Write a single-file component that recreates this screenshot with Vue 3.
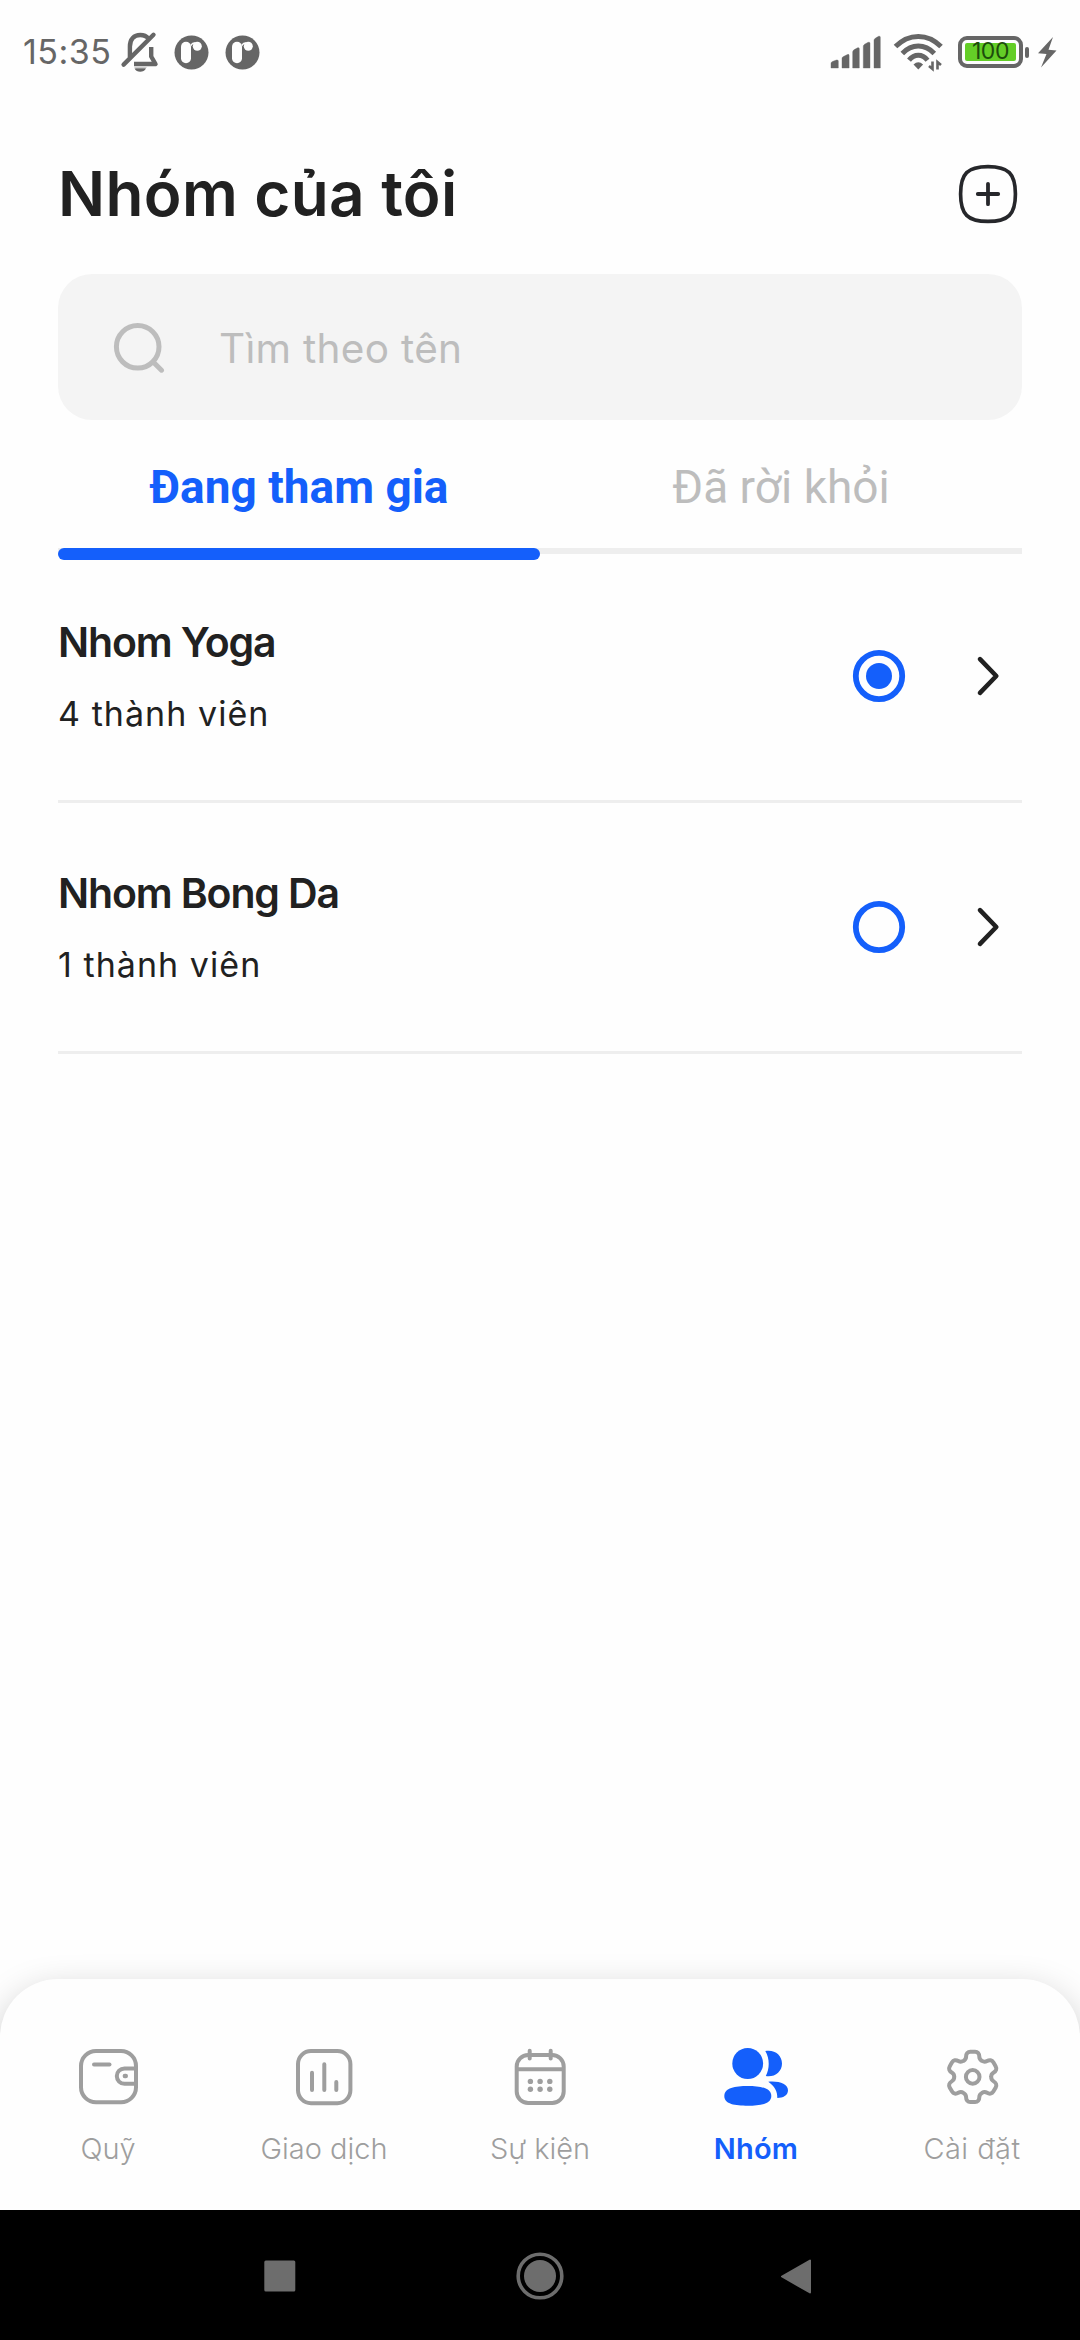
<script setup>
const groups = [
  { name: 'Nhom Yoga', members: '4 thành viên', selected: true },
  { name: 'Nhom Bong Da', members: '1 thành viên', selected: false },
]

const navItems = [
  { key: 'fund', label: 'Quỹ' },
  { key: 'trade', label: 'Giao dịch' },
  { key: 'event', label: 'Sự kiện' },
  { key: 'group', label: 'Nhóm', active: true },
  { key: 'settings', label: 'Cài đặt' },
]

// One tooth of the gear, repeated every 60 degrees around (32.7, 31.9)
function gearPath() {
  const tooth = [
    [-7.6, -16.9], [-6.6, -18.3], [-6.6, -20.4],
    [-6.6, -23.2], [-5, -25.2], [-2.4, -25.2],
    [-1, -25.2], [1, -25.2], [2.4, -25.2],
    [5, -25.2], [6.6, -23.2], [6.6, -20.4],
    [6.6, -18.3], [7.6, -16.9], [9.25, -16],
  ]
  const turn = ([x, y], deg) => {
    const a = (deg * Math.PI) / 180
    const px = 32.7 + x * Math.cos(a) - y * Math.sin(a)
    const py = 31.9 + x * Math.sin(a) + y * Math.cos(a)
    return px.toFixed(2) + ' ' + py.toFixed(2)
  }
  let d = 'M' + turn([-9.25, -16], 0)
  for (let k = 0; k < 6; k++) {
    for (let i = 0; i < tooth.length; i += 3) {
      d += 'C' + tooth.slice(i, i + 3).map((p) => turn(p, k * 60)).join(' ')
    }
  }
  return d + 'Z'
}
const gear = gearPath()
</script>

<template>
  <div class="screen">
    <header class="status">
      <span class="time">15:35</span>
      <svg class="bell" width="40" height="44" viewBox="0 0 40 44">
        <g fill="none" stroke="#666" stroke-width="4.400" stroke-linecap="round" stroke-linejoin="round">
          <path d="M9.900 27V16.500C9.900 9 14 5 20.300 5c3.500 0 6.300 1.300 8.200 3.600" />
          <path d="M31.200 17v9.500l4.300 7.500H14" stroke-linecap="butt" />
          <path d="M3.600 34.600 33.500 4.800" />
        </g>
        <path d="M14 37.300h13l-2.500 2h-8z" fill="#bbb" />
        <path d="M14.500 38.500h11.500q-2 3.200-5.800 3.200t-5.700-3.200z" fill="#666" />
      </svg>
      <svg v-for="n in 2" :key="n" class="app-badge" width="35" height="35" viewBox="0 0 35 35">
        <circle cx="17.500" cy="17.500" r="17" fill="#666" />
        <rect x="7" y="6.800" width="10" height="21.500" rx="5" fill="#fefefe" />
        <circle cx="23.300" cy="11.300" r="4.500" fill="#fefefe" />
        <path d="M16.500 9.500q1.500-2.600 5-2.500l-1.500 2q-2 0-3 2.500z" fill="#fefefe" />
      </svg>
      <span class="spacer"></span>
      <svg width="54" height="44" viewBox="0 0 54 44" fill="#666">
        <path d="M2 38v-4.500q0-1.500 1.500-2l4-1.500q1.800-.3 1.800 1V38zM13 38V28.500q0-1.500 1.500-2l4-2q1.600-.6 1.600 1V38zM23.700 38V22q0-1.500 1.300-2.200l3.600-2q1.700-.6 1.700 1V38zM34.300 38V16.500q0-1.500 1.300-2.200l3.600-2q1.800-.6 1.800 1V38zM45 38V10.500q0-1.500 1.300-2.200l3.300-2q1.700-.6 1.700 1V38z" stroke="#666" stroke-width=".4" stroke-linejoin="round" />
      </svg>
      <svg class="wifi" width="54" height="44" viewBox="0 0 54 44">
        <g fill="none" stroke="#666" stroke-width="5">
          <path d="M4.500 16.600Q14.500 6.400 27.300 6.400T50 16.600" />
          <path d="M11.300 23.400Q18.500 16 27.300 16T43.300 23.400" />
          <path d="M18 30.200Q22 25.300 27.300 25.300T36.500 30.200" />
        </g>
        <path d="M22.500 34.500q4.800-4.500 9.600 0L27.300 39.400z" fill="#666" />
        <path d="M41.500 31.500v7.500l-3.500-3M46.500 39.500v-7.500l3.500 3" fill="none" stroke="#666" stroke-width="2.600" />
      </svg>
      <div class="battery"><span class="charge">100</span></div>
      <span class="nub"></span>
      <svg class="bolt" width="22" height="34" viewBox="0 0 22 34">
        <path d="M17 2 2 18.300l8.500.8L5 32.500 20.500 15.500l-8-.8z" fill="#666" />
      </svg>
    </header>

    <section class="head">
      <h1>Nhóm của tôi</h1>
      <svg width="70" height="70" viewBox="0 0 24 24" fill="none" stroke="#26272b" stroke-linecap="round">
        <path d="M2.600 12C2.600 5 5 2.600 12 2.600S21.400 5 21.400 12 19 21.400 12 21.400 2.600 19 2.600 12z" stroke-width="1.250" />
        <path d="M12 8.500v7M8.500 12h7" stroke-width="1.300" />
      </svg>
    </section>

    <div class="search">
      <svg width="52" height="54" viewBox="0 0 52 54" fill="none" stroke="#bdbdbd" stroke-width="5">
        <circle cx="24.700" cy="26.800" r="21.300" />
        <path d="m41 42.800 7.500 7.400" stroke-linecap="round" />
      </svg>
      <span class="placeholder">Tìm theo tên</span>
    </div>

    <div class="tabs">
      <div class="tab active"><span>Đang tham gia</span></div>
      <div class="tab"><span>Đã rời khỏi</span></div>
    </div>
    <div class="track"><div class="bar"></div></div>

    <main class="list">
      <div v-for="g in groups" :key="g.name" class="row">
        <div class="info">
          <div class="name">{{ g.name }}</div>
          <div class="members">{{ g.members }}</div>
        </div>
        <svg class="radio" width="54" height="54" viewBox="0 0 54 54">
          <circle cx="27" cy="27" r="23.200" fill="none" stroke="#145ffb" stroke-width="5.800" />
          <circle v-if="g.selected" cx="27" cy="27" r="13" fill="#145ffb" />
        </svg>
        <svg class="chevron" width="26" height="44" viewBox="0 0 26 44">
          <path d="M5 5.200 21.300 22 5 38.800" fill="none" stroke="#212121" stroke-width="4.600" stroke-linecap="round" stroke-linejoin="round" />
        </svg>
      </div>
    </main>

    <nav class="bottom">
      <div v-for="n in navItems" :key="n.key" class="nav-item" :class="[n.key, { on: n.active }]">
        <svg width="64" height="64" viewBox="0 0 64 64" fill="none" stroke="#9e9e9e" stroke-width="4" stroke-linecap="round">
          <template v-if="n.key === 'fund'">
            <rect x="5" y="6" width="55" height="51.300" rx="15" />
            <path d="M18 19.400h15.500" />
            <path d="M59 23.400H48.500a7.700 7.700 0 0 0 0 15.400H59" stroke-linecap="butt" />
            <path d="M48.800 31h1" stroke-width="4.400" />
          </template>
          <template v-else-if="n.key === 'trade'">
            <rect x="6" y="6" width="52.400" height="52.200" rx="13" />
            <path d="M20 27.700V45M32.300 19.200V45M44.300 37V45" />
          </template>
          <template v-else-if="n.key === 'event'">
            <rect x="8.700" y="10" width="47" height="48" rx="11.500" />
            <path d="M8.700 24.300h47" stroke-linecap="butt" />
            <path d="M21.700 5.800v7.800M42.700 5.800v7.800" />
            <g fill="#9e9e9e" stroke="none">
              <circle v-for="i in 6" :key="i" :cx="22.4 + ((i - 1) % 3) * 9.7" :cy="i > 3 ? 44.3 : 36.4" r="2.700" />
            </g>
          </template>
          <g v-else-if="n.key === 'group'" fill="#145ffb" stroke="none">
            <circle cx="23.700" cy="18.500" r="15.400" />
            <path d="M23.800 41C11 41 .3 42.800.3 51S11 60.700 23.800 60.700 47.300 59 47.300 51 36 41 23.800 41z" />
            <path d="M41.300 6C50.500 4.200 58 10 58 18.400S50.500 32.500 41.800 31C45.600 24 46 14 41.300 6z" />
            <path d="M44.300 36.800C55 35.800 64 39 64 45.300 64 50.500 59 53 53.300 53 53.500 46.500 50.500 41 44.300 36.800z" />
          </g>
          <template v-else>
            <path :d="gear" />
            <circle cx="32.700" cy="31.900" r="6.800" />
          </template>
        </svg>
        <span class="label">{{ n.label }}</span>
      </div>
    </nav>

    <footer class="system">
      <svg width="48" height="48" viewBox="0 0 48 48"><rect x="8.300" y="8.500" width="31" height="31" rx="1.500" fill="#6d6d6d" /></svg>
      <svg width="48" height="48" viewBox="0 0 48 48">
        <circle cx="24" cy="24" r="21.800" fill="none" stroke="#6d6d6d" stroke-width="3.600" />
        <circle cx="24" cy="24" r="16" fill="#6d6d6d" />
      </svg>
      <svg width="48" height="48" viewBox="0 0 48 48">
        <path d="M6 24.500 34 8.500v32z" fill="#6d6d6d" stroke="#6d6d6d" stroke-width="2" stroke-linejoin="round" />
      </svg>
    </footer>
  </div>
</template>

<style>
body {
  background: #fefefe;
}
</style>

<style scoped>
.screen {
  width: 1080px;
  height: 2340px;
  display: flex;
  flex-direction: column;
  background: #fefefe;
  color: #212121;
  font-family: Inter, 'Liberation Sans', sans-serif;
  overflow: hidden;
  white-space: nowrap;
}
.screen svg {
  display: block;
  flex: none;
}
.status {
  height: 104px;
  flex: none;
  display: flex;
  align-items: center;
  padding: 0 22px 0 23px;
  box-sizing: border-box;
  color: #666;
}
.time {
  width: 97px;
  font-size: 34px;
  line-height: 40px;
  letter-spacing: 0.500px;
}
.app-badge {
  margin-left: 14px;
}
.app-badge + .app-badge {
  margin-left: 16px;
}
.spacer {
  flex: 1;
}
.wifi {
  margin-left: 8px;
}
.battery {
  width: 65px;
  height: 32px;
  margin-left: 13px;
  box-sizing: border-box;
  border: 4.500px solid #666;
  border-radius: 9px;
  padding: 3px;
  display: flex;
}
.charge {
  flex: 1;
  border-radius: 2px;
  background: #64ce27;
  color: #1d4d0c;
  font-size: 23px;
  line-height: 17px;
  letter-spacing: -0.400px;
  text-align: center;
}
.nub {
  width: 4px;
  height: 11px;
  margin-left: 2px;
  border-radius: 2px;
  background: #666;
}
.bolt {
  margin-left: 7px;
}
.head {
  height: 170px;
  flex: none;
  box-sizing: border-box;
  padding: 9px 57px 0 58px;
  display: flex;
  align-items: center;
  justify-content: space-between;
}
h1 {
  margin: 0;
  font-size: 62px;
  line-height: 80px;
  font-weight: 600;
  letter-spacing: 0.400px;
}
.search {
  height: 146px;
  flex: none;
  margin: 0 58px;
  box-sizing: border-box;
  padding-left: 55px;
  border-radius: 34px;
  background: #f4f4f4;
  display: flex;
  align-items: center;
  gap: 54px;
}
.placeholder {
  padding-top: 2px;
  font-size: 40.500px;
  letter-spacing: 0.300px;
  color: #bdbdbd;
}
.tabs {
  height: 128px;
  flex: none;
  box-sizing: border-box;
  margin: 0 58px;
  padding-top: 40px;
  display: flex;
}
.tab {
  flex: 1;
  text-align: center;
  font-family: Roboto, sans-serif;
  font-size: 46px;
  line-height: 54px;
  color: #bdbdbd;
}
.tab.active {
  font-weight: 700;
  color: #145ffb;
}
.track {
  height: 12px;
  flex: none;
  margin: 0 58px;
  background: linear-gradient(#eee 5.500px, transparent 5.500px);
}
.bar {
  width: 50%;
  height: 11.500px;
  border-radius: 6px;
  background: #145ffb;
}
.list {
  flex: 1;
  margin: -8px 58px 0;
}
.row {
  height: 251px;
  box-sizing: border-box;
  border-bottom: 3px solid #eee;
  display: flex;
  align-items: center;
}
.info {
  flex: 1;
}
.name {
  font-size: 41px;
  line-height: 50px;
  font-weight: 600;
  letter-spacing: -1.150px;
}
.members {
  margin-top: 25px;
  font-size: 34px;
  line-height: 44px;
  letter-spacing: 1.050px;
}
.radio {
  margin-right: 69px;
}
.chevron {
  margin-right: 21px;
}
.bottom {
  height: 231px;
  flex: none;
  box-sizing: border-box;
  padding-top: 66px;
  border-radius: 58px 58px 0 0;
  background: #fefefe;
  box-shadow: 0 12px 36px rgba(0, 0, 0, 0.22);
  display: flex;
}
.nav-item {
  flex: 1;
  display: flex;
  flex-direction: column;
  align-items: center;
  gap: 22px;
}
.label {
  font-size: 29px;
  line-height: 36px;
  font-weight: 300;
  color: #9e9e9e;
}
.settings .label {
  letter-spacing: 0.450px;
}
.on .label {
  font-weight: 600;
  letter-spacing: 0.200px;
  color: #145ffb;
}
.system {
  height: 130px;
  flex: none;
  box-sizing: border-box;
  padding-top: 2px;
  background: #000;
  display: flex;
  align-items: center;
  justify-content: center;
  gap: 212px;
}
</style>
